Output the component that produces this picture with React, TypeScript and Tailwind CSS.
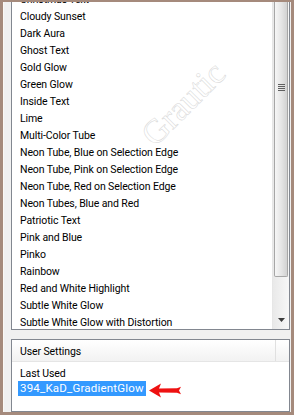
import type { ReactNode } from 'react';

const presets = [
  'Christmas Text',
  'Cloudy Sunset',
  'Dark Aura',
  'Ghost Text',
  'Gold Glow',
  'Green Glow',
  'Inside Text',
  'Lime',
  'Multi-Color Tube',
  'Neon Tube, Blue on Selection Edge',
  'Neon Tube, Pink on Selection Edge',
  'Neon Tube, Red on Selection Edge',
  'Neon Tubes, Blue and Red',
  'Patriotic Text',
  'Pink and Blue',
  'Pinko',
  'Rainbow',
  'Red and White Highlight',
  'Subtle White Glow',
  'Subtle White Glow with Distortion',
];

function Row({ children }: { children: ReactNode }) {
  return <div className="flex h-[17px] items-center pl-2 pt-[4px] whitespace-nowrap">{children}</div>;
}

/* barre de défilement verticale, style Windows 7 */
function ScrollBar() {
  return (
    <div className="flex w-[17px] shrink-0 flex-col border-l border-[#e6e6e6] bg-gradient-to-r from-[#e9e9e9] to-[#f7f7f7]">
      <div className="mx-[1px] flex h-[288px] flex-col items-center rounded-b-[2px] border border-t-0 border-[#a6a6a6] bg-gradient-to-r from-[#f6f6f6] via-[#e6e6e6] to-[#d2d2d2]">
        <div className="mt-[95px] flex flex-col gap-[1px]">
          <span className="h-[1px] w-[7px] bg-[#606060]" />
          <span className="h-[1px] w-[7px] bg-[#606060]" />
          <span className="h-[1px] w-[7px] bg-[#606060]" />
          <span className="h-[1px] w-[7px] bg-[#606060]" />
        </div>
      </div>
      <div className="flex-1" />
      <div className="flex h-[17px] items-center justify-center pb-[2px]">
        <svg width="7" height="4" viewBox="0 0 7 4">
          <path d="M0 0h7L3.5 4z" fill="#3c3c3c" />
        </svg>
      </div>
    </div>
  );
}

function RedArrow() {
  return (
    <svg aria-hidden="true" className="ml-[3px] mt-[3px] shrink-0" width="33" height="15" viewBox="0 0 33 15">
      <path
        d="M0 7.5 L12 0.5 L10 5.5 L28 5.2 L32 3.8 L30 7.5 L32 11.2 L28 9.8 L10 9.5 L12 14.5 Z"
        fill="#ee1111"
      />
    </svg>
  );
}

export default function App() {
  return (
    <div className="h-[415px] w-[294px] overflow-hidden bg-[#a58a7c] px-[3px] pb-[3px] pt-[2px] font-['Roboto',sans-serif] text-[10.5px] tracking-[-0.1px] text-black">
      <div className="relative flex h-full flex-col overflow-hidden border-l border-[#fbf8f4] bg-[#f0f0f0] pl-[7px] pr-[1px]">
        {/* filigrane */}
        <span
          aria-hidden="true"
          className="pointer-events-none absolute left-[128px] top-[76px] -rotate-[45deg] font-['Liberation_Serif',serif] text-[34px] tracking-normal text-transparent [-webkit-text-stroke:0.5px_#d6d6d6]"
        >
          Grautic
        </span>

        {/* liste des préréglages */}
        <div className="-mt-[14px] flex h-[342px] shrink-0 border border-[#828790] bg-white">
          <div className="flex-1">
            {presets.map((p) => (
              <Row key={p}>{p}</Row>
            ))}
          </div>
          <ScrollBar />
        </div>

        {/* paramètres utilisateur */}
        <div className="relative mt-[9px] flex-1 border border-[#828790] bg-white">
          <div className="flex h-[22px] border-b border-[#e5e5e5] bg-gradient-to-b from-white to-[#f2f2f2]">
            <div className="flex flex-1 items-center pl-2 pt-[2px]">User Settings</div>
            <div className="w-[14px] border-l border-[#e0e0e0]" />
          </div>
          <div className="pt-[4px]">
            <div className="flex h-[15px] items-center pl-2 pt-[1px]">Last Used</div>
            <div className="flex h-[15px] items-center pl-[6px]">
              <span className="bg-[#3399ff] px-[2px] text-[11.5px] leading-[15px] tracking-[0.2px] text-white">
                394_KaD_GradientGlow
              </span>
              <RedArrow />
            </div>
          </div>
        </div>
      </div>
    </div>
  );
}
